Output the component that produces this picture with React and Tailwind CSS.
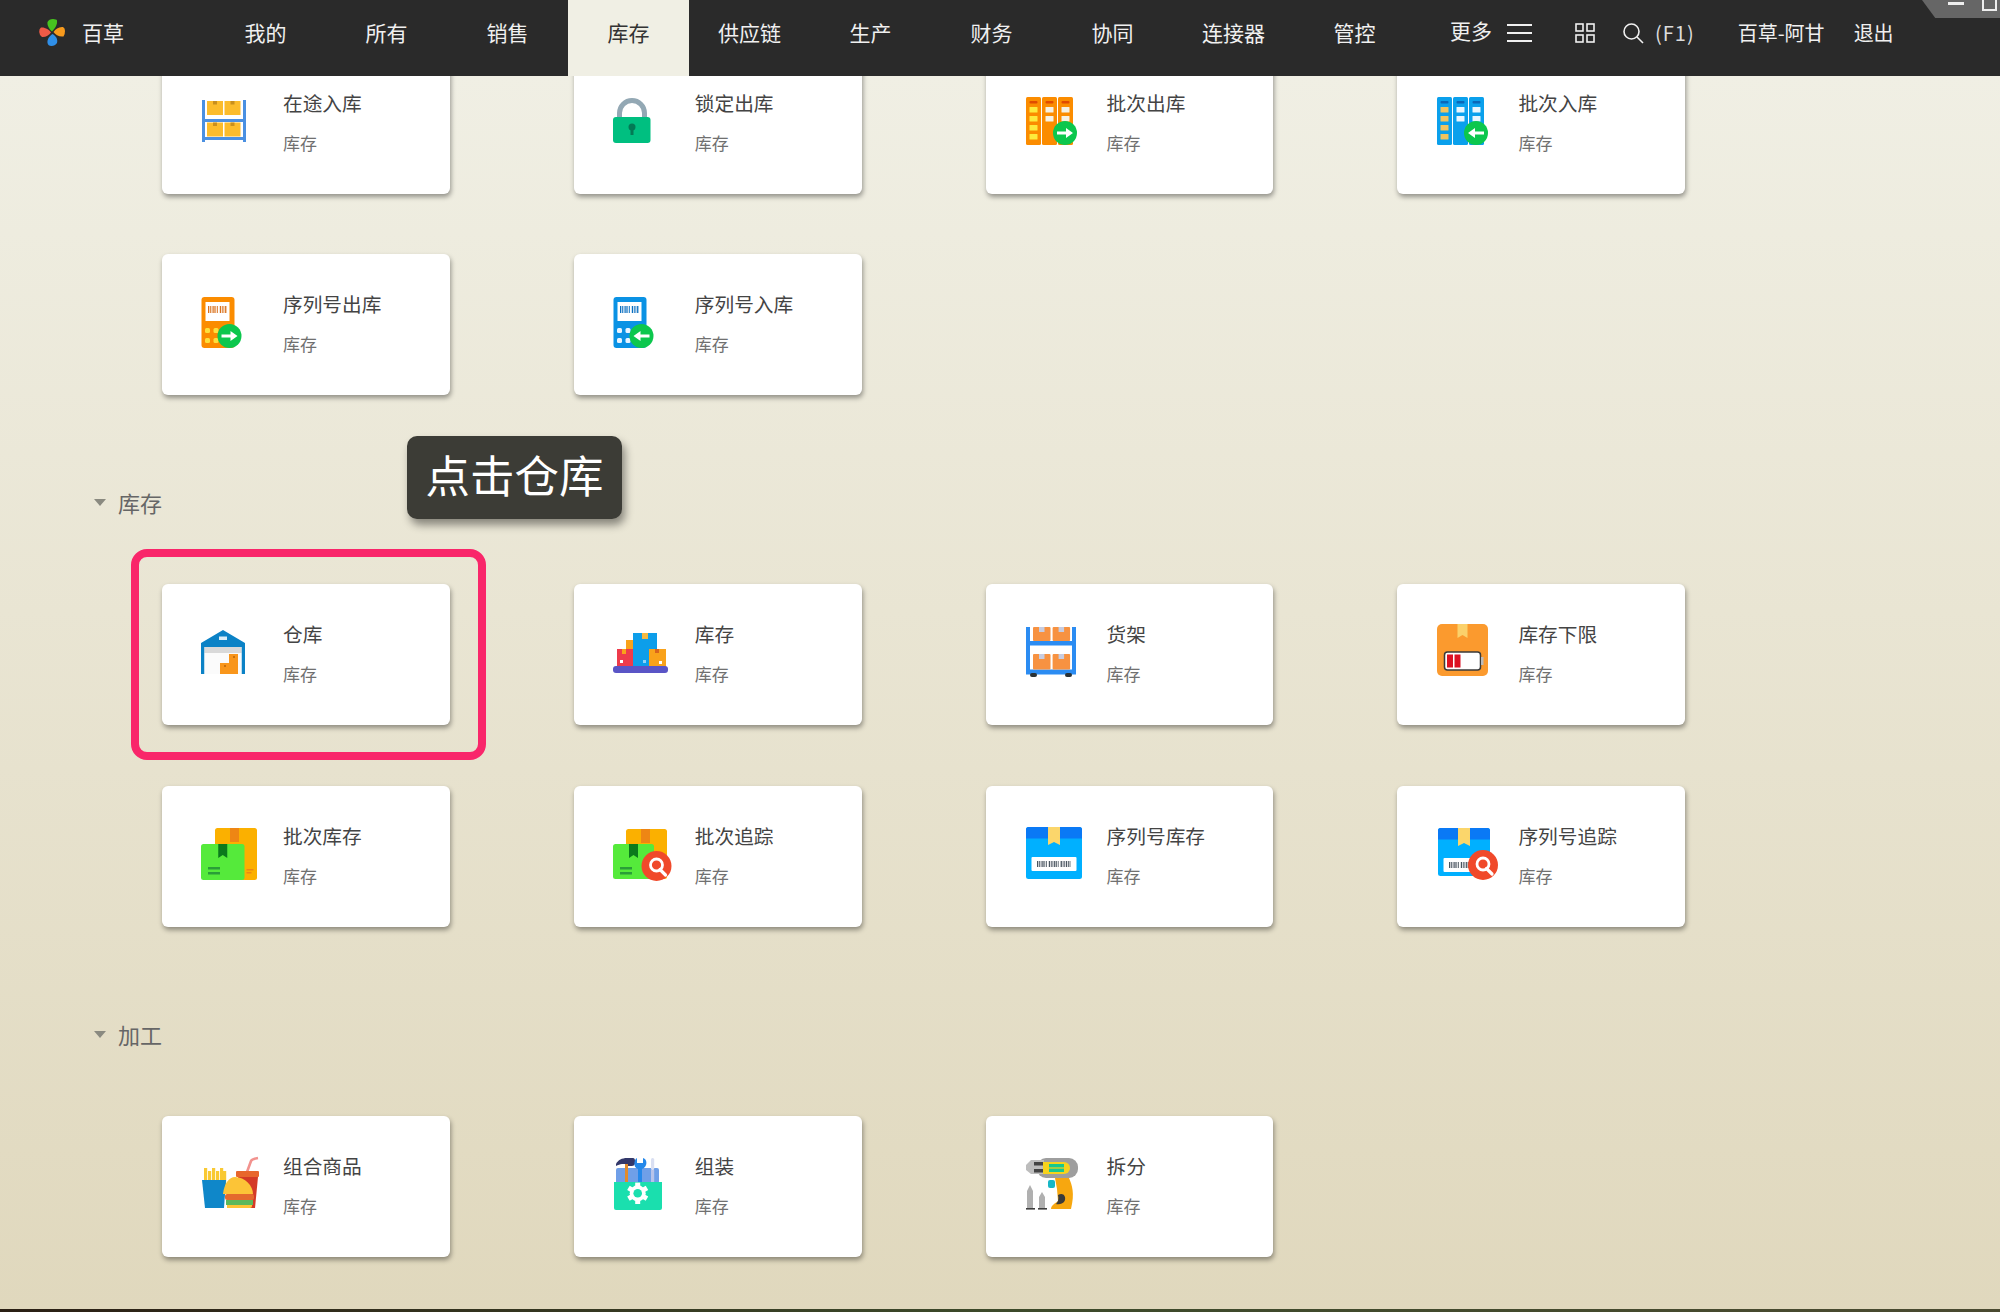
import React from "react";

const Arrow = ({ cx, cy, dir, r = 12 }) => (
  <g>
    <circle cx={cx} cy={cy} r={r} fill="#0cc74d" />
    {dir === "r" ? (
      <path d={`M${cx - 8} ${cy - 1.6}h9v-3.4l7 5l-7 5v-3.4h-9z`} fill="#fff" />
    ) : (
      <path d={`M${cx + 8} ${cy - 1.6}h-9v-3.4l-7 5l7 5v-3.4h9z`} fill="#fff" />
    )}
  </g>
);

const Lens = ({ cx, cy, r = 15 }) => (
  <g>
    <circle cx={cx} cy={cy} r={r} fill="#f0492a" />
    <circle cx={cx} cy={cy - 1} r={6} fill="none" stroke="#fff" strokeWidth="2.8" />
    <path d={`M${cx + 3.5} ${cy + 3.5}l5.5 5.5`} stroke="#fff" strokeWidth="3.2" strokeLinecap="round" />
  </g>
);

const Barcode = ({ x, y, w, h, fill }) => {
  const bars = [];
  let p = x;
  let i = 0;
  while (p < x + w) {
    const bw = i % 3 === 0 ? 1.3 : 0.8;
    bars.push(<rect key={i} x={p} y={y} width={bw} height={h} fill={fill} />);
    p += bw + (i % 6 === 5 ? 2 : 0.8);
    i += 1;
  }
  return <g>{bars}</g>;
};

const Shelf = () => (
  <g>
    <rect x="1" y="8" width="3" height="42" fill="#4a90e2" />
    <rect x="42" y="8" width="3" height="42" fill="#4a90e2" />
    <rect x="1" y="27" width="44" height="3" fill="#4a90e2" />
    <rect x="1" y="45" width="44" height="3" fill="#4a90e2" />
    {[[6, 9], [23.5, 9], [6, 30.5], [23.5, 30.5]].map(([x, y]) => (
      <g key={`${x}-${y}`}>
        <rect x={x} y={y} width="16" height="14" fill="#fbbc2c" />
        <rect x={x + 6} y={y} width="4" height="3.5" fill="#c88f1e" />
      </g>
    ))}
  </g>
);

const Lock = () => (
  <g>
    <path d="M6.5 28V21a12.5 12.5 0 0 1 25 0V28" fill="none" stroke="#93a8b4" strokeWidth="5" />
    <rect x="0" y="25" width="37.5" height="26" rx="3" fill="#00bf80" />
    <circle cx="19" cy="35" r="3.5" fill="#037a55" />
    <rect x="17.5" y="36" width="3" height="7" fill="#037a55" />
  </g>
);

const Scanner = ({ body, dot, bar, arrow }) => (
  <g>
    <rect x="0.5" y="4" width="33" height="51" rx="3" fill={body} />
    <rect x="4.5" y="9" width="24" height="19" fill="#fff" />
    <Barcode x={7} y={13} w={19} h={7} fill={bar} />
    <rect x="4" y="35" width="5" height="5" rx="1.5" fill={dot} />
    <rect x="4" y="45" width="5" height="5" rx="1.5" fill={dot} />
    <rect x="12.5" y="35" width="5" height="5" rx="1.5" fill={dot} />
    <rect x="12.5" y="45" width="5" height="5" rx="1.5" fill={dot} />
    <Arrow cx={28.5} cy={43} dir={arrow} />
  </g>
);

const Racks = ({ base, top, left, right, arrow }) => (
  <g>
    {[1, 17, 33].map((x, i) => (
      <g key={x}>
        <rect x={x} y="5" width="15" height="48" rx="1.5" fill={base} />
        <rect x={x + 3.5} y="9" width="8" height="2.5" rx="1" fill={top} />
        {(i === 0 ? [0, 1, 2, 3] : [0, 1]).map((r) => (
          <rect key={r} x={x + 3.5} y={15 + r * 9} width="8" height="5.5" rx="0.6" fill={i === 0 ? left : right} />
        ))}
      </g>
    ))}
    <Arrow cx={40} cy={41} dir={arrow} />
  </g>
);

const Warehouse = () => (
  <g>
    <path d="M22 7L44 20V51H40.5V24H3.5V51H0V20Z" fill="#0b82c6" />
    <rect x="18" y="13.5" width="8" height="3.5" fill="#dbeef8" />
    <rect x="3.5" y="24" width="37" height="6" fill="#d9d9d9" />
    <rect x="3.5" y="30" width="37" height="21" fill="#fbfbfb" />
    <path d="M19 51V40H28V31H37V51Z" fill="#f9961b" />
    <rect x="32" y="33" width="2" height="2" fill="#c96f0b" />
    <rect x="23" y="42" width="2" height="2" fill="#c96f0b" />
  </g>
);

const Boxes = () => (
  <g>
    <rect x="13" y="17" width="8" height="12" fill="#f9a21a" />
    <rect x="4" y="26" width="16" height="18" fill="#ee3b4b" />
    <rect x="9" y="26" width="4" height="5" fill="#f9a21a" />
    <rect x="7" y="37" width="3" height="3" fill="#fff" />
    <rect x="20" y="10" width="24" height="34" fill="#0d9eea" />
    <rect x="29" y="10" width="6" height="6" fill="#f4b942" />
    <rect x="30" y="37" width="3" height="3" fill="#8fd4f7" />
    <rect x="36" y="26" width="17" height="18" fill="#f9a21a" />
    <rect x="42" y="26" width="4" height="4" fill="#d9651c" />
    <rect x="46" y="38" width="3" height="3" fill="#fff" />
    <rect x="0" y="43" width="55" height="7" rx="3" fill="#5a55c6" />
  </g>
);

const CartShelf = () => (
  <g>
    <rect x="4" y="4" width="44" height="43" fill="#fff" />
    <rect x="1" y="4" width="4" height="47" fill="#2b8cf2" />
    <rect x="47" y="4" width="4" height="47" fill="#2b8cf2" />
    <rect x="1" y="18" width="50" height="4.5" fill="#2b8cf2" />
    <rect x="1" y="46.5" width="50" height="5" fill="#2b8cf2" />
    {[[8, 4, 14], [27.6, 4, 14], [8, 31, 15.5], [27.6, 31, 15.5]].map(([x, y, h]) => (
      <g key={`${x}-${y}`}>
        <rect x={x} y={y} width="17.5" height={h} rx="1" fill="#f79241" />
        <rect x={x + 6} y={y} width="5.5" height="5" fill="#c7cce0" />
      </g>
    ))}
    <rect x="5" y="50" width="7" height="4" rx="2" fill="#2a3236" />
    <rect x="40" y="50" width="7" height="4" rx="2" fill="#2a3236" />
  </g>
);

const LowStock = () => (
  <g>
    <rect x="1" y="1" width="51" height="52" rx="5" fill="#fb9a2e" />
    <path d="M21.5 1h10v14l-5 -3l-5 3z" fill="#fbd16b" />
    <rect x="8.5" y="29" width="36" height="18" rx="3" fill="#fff" stroke="#3a3a3a" strokeWidth="1.5" />
    <rect x="45" y="34" width="2.5" height="8" fill="#bcbcbc" />
    <rect x="11" y="31.5" width="6" height="13" fill="#dc1122" />
    <rect x="18.5" y="31.5" width="6" height="13" fill="#dc1122" />
  </g>
);

const BatchBox = ({ x1 = 14, x2 = 56, y1 = 3, gx2 = 43.5, by = 55, lens = false }) => (
  <g>
    <rect x={x1} y={y1} width={x2 - x1} height={by - y1} rx="2.5" fill="#fbb000" />
    <rect x={x1 + 15} y={y1} width="9" height="14" fill="#ee8614" />
    <rect x={gx2 + 2} y="44" width="7" height="1.5" fill="#ee8614" />
    <rect x={gx2 + 2} y="47" width="5" height="1.5" fill="#ee8614" />
    <rect x="0" y="19" width={gx2} height={by - 19} rx="2.5" fill="#55ea3b" />
    <path d={`M${gx2 / 2 - 4.5} 19h9v14l-4.5 -3l-4.5 3z`} fill="#0b7a1c" />
    <rect x="7" y="42" width="12" height="2.5" fill="#2a9e38" />
    <rect x="7" y="47" width="12" height="2.5" fill="#2a9e38" />
    {lens && <Lens cx={43.5} cy={41} />}
  </g>
);

const SerialBox = ({ w = 56, x = 1, y = 2, h = 52, lens = false }) => (
  <g>
    <rect x={x} y={y} width={w} height={h} rx="2.5" fill="#00b0ff" />
    <path d={`M${x + 2.5} ${y}h${w - 5}a2.5 2.5 0 0 1 2.5 2.5v9h-${w}v-9a2.5 2.5 0 0 1 2.5 -2.5z`} fill="#0a79f5" />
    <path d={`M${x + w / 2 - 6} ${y}h12v18l-6 -3l-6 3z`} fill="#fbd66b" />
    <rect x={x + 5.5} y={y + 30} width={w - 11} height="14" rx="1" fill="#fff" />
    <Barcode x={x + 11} y={y + 34} w={w - 22} h={6} fill="#4a5560" />
    {lens && <Lens cx={47} cy={40} />}
  </g>
);

const Combo = () => (
  <g>
    <path d="M46 17L50 6Q51 4 57 3" stroke="#f2928e" strokeWidth="2.6" fill="none" />
    <path d="M37 22H57L54 53H39Z" fill="#d43a26" />
    <rect x="35" y="16" width="23" height="6" rx="1" fill="#e8662c" />
    {[3, 7, 11, 15, 19, 22].map((x, i) => (
      <rect key={x} x={x} y={13 + (i % 2) * 3} width="3.2" height="14" fill="#f9c933" />
    ))}
    <path d="M1 25H25L23 53H4Z" fill="#0f87c9" />
    <path d="M22 39C23 29 28 22 34 22C44 22 52 31 52 39Z" fill="#fcc437" />
    <rect x="24" y="39" width="29" height="6" rx="2" fill="#e4692d" />
    <rect x="25" y="45" width="27" height="5" fill="#5bb85c" />
    <path d="M26 50H51V51Q51 53 49 53H26Z" fill="#fcc437" />
  </g>
);

const Kit = () => (
  <g>
    <rect x="3" y="13" width="43" height="16" rx="2" fill="#6f9fe8" />
    <rect x="12" y="8" width="3" height="22" fill="#e28b2c" />
    <path d="M3 9C5 5 9 3 14 3H20Q22 3 22 6V9Q21 11 19 11H15V9H9C7 9 5 10 3 11Z" fill="#33386a" />
    <path d="M24 3V8H30V3C33 4 34 7 33 10C32 13 29 14 29 14V29H25V14S22 13 21.5 10C21 7 22 4 24 3Z" fill="#2488ea" />
    <rect x="38" y="3" width="3.2" height="12" rx="1.5" fill="#d9dff2" />
    <rect x="38" y="15" width="3.2" height="13" fill="#b7c3ea" />
    <path d="M1 27H49V53Q49 55 47 55H3Q1 55 1 53Z" fill="#1adfae" />
    <g fill="#fff">
      {[0, 60, 120, 180, 240, 300].map((a) => (
        <rect key={a} x="22.2" y="27.6" width="5" height="5" transform={`rotate(${a} 24.7 38.3)`} />
      ))}
    </g>
    <circle cx="24.7" cy="38.3" r="8" fill="#fff" />
    <circle cx="24.7" cy="38.3" r="4.3" fill="#1adfae" />
  </g>
);

const Drill = () => (
  <g>
    <path d="M30 23H44C47 30 50 38 46 54H26C26 50 31 48 33 46L32 34Z" fill="#f7a70f" />
    <path d="M33 40C38 37 41 41 40 45C39 49 33 50 31 49C33 47 34 44 33 40Z" fill="#3a3a3a" />
    <rect x="23" y="25" width="7" height="8" rx="2" fill="#17b7c6" />
    <rect x="12" y="3" width="41" height="20" rx="9" fill="#9e9e9e" />
    <path d="M1 10L6 5H19V19H6L1 15Z" fill="#bdbdbd" />
    <rect x="9" y="7" width="9" height="3.5" fill="#444" />
    <rect x="9" y="14" width="9" height="3.5" fill="#444" />
    <path d="M18 7H39A6 6 0 0 1 39 19H18Z" fill="#f7d31c" />
    <rect x="24" y="9" width="15" height="3.4" fill="#17c88f" />
    <rect x="24" y="13.6" width="15" height="3.4" fill="#17c88f" />
    <path d="M5 30L2 36V53H8V36Z" fill="#b0b0b0" />
    <path d="M17 37L14 42V53H20V42Z" fill="#b0b0b0" />
    <rect x="1" y="53" width="9" height="1.6" fill="#3e3e3e" />
    <rect x="13" y="53" width="9" height="1.6" fill="#3e3e3e" />
  </g>
);

const sectionA = [
  ["在途入库", <Shelf />],
  ["锁定出库", <Lock />],
  ["批次出库", <Racks base="#fb8c00" top="#e04b00" left="#fdeb3c" right="#f5f1e4" arrow="r" />],
  ["批次入库", <Racks base="#0aa0ec" top="#0a67b8" left="#f2c45e" right="#e8f6ff" arrow="l" />],
  ["序列号出库", <Scanner body="#fb8c00" dot="#fde03c" bar="#d9701a" arrow="r" />],
  ["序列号入库", <Scanner body="#0a92e4" dot="#e8f4ff" bar="#0a6fc0" arrow="l" />],
];
const sectionB = [
  ["仓库", <Warehouse />],
  ["库存", <Boxes />],
  ["货架", <CartShelf />],
  ["库存下限", <LowStock />],
  ["批次库存", <BatchBox />],
  ["批次追踪", <BatchBox x1={13} x2={54} y1={4} gx2={41} by={54} lens />],
  ["序列号库存", <SerialBox />],
  ["序列号追踪", <SerialBox x={2} y={3} w={52} h={48} lens />],
];
const sectionC = [
  ["组合商品", <Combo />],
  ["组装", <Kit />],
  ["拆分", <Drill />],
];

const Card = ({ title, icon }) => (
  <div className="flex h-[141px] w-[287.8px] rounded-[6px] bg-white pl-[39px] pt-[39px] shadow-[1px_3px_5px_rgba(0,0,0,0.38)]">
    <svg width="64" height="64" viewBox="0 0 64 64" className="shrink-0">
      {icon}
    </svg>
    <div className="ml-[18px]">
      <div className="-mt-[3px] text-[19.7px] leading-[28px] text-[#444]">{title}</div>
      <div className="mt-[14px] text-[17px] leading-[24px] text-[#707070]">库存</div>
    </div>
  </div>
);

const Grid = ({ items, gapClass = "gap-y-[61px]" }) => (
  <div className={`grid grid-cols-[repeat(4,287.8px)] gap-x-[124px] ${gapClass} pl-[162px]`}>
    {items.map(([t, i]) => (
      <Card key={t} title={t} icon={i} />
    ))}
  </div>
);

const SectionLabel = ({ children }) => (
  <div className="flex h-[28px] items-center pl-[94px] text-[22px] leading-[28px] text-[#666]">
    <span className="mr-[12px] h-0 w-0 border-x-[6.5px] border-t-[7px] border-x-transparent border-t-[#8a8a80]" />
    {children}
  </div>
);

const Logo = () => (
  <svg width="27" height="27" viewBox="0 0 27 27">
    <path d="M13 12.5C10 10 8 6 8.5 3Q10 0 14 0Q17.5 0 18 1.5C18.5 6 16 9 13 12.5Z" fill="#47c41f" />
    <path d="M14.5 13C16.5 10 20 7.5 24 8Q26 9 26 12Q26 16 24.5 17.5C20 18 16.5 16 14.5 13Z" fill="#f79a1d" />
    <path d="M13.5 15C17 17 19 20 18 24Q16 27 12.5 27Q9 27 8.5 24C8 20 10.5 17 13.5 15Z" fill="#2f8fe8" />
    <path d="M12 13.5C10 16 6.5 18.5 3 18Q0.5 16.5 0.2 13Q0 9.5 2 8.5C6 8 10 10.5 12 13.5Z" fill="#ee5a47" />
  </svg>
);

const tabs = ["我的", "所有", "销售", "库存", "供应链", "生产", "财务", "协同", "连接器", "管控"];

export default function App() {
  return (
    <div className="relative flex h-[1312px] w-[2000px] flex-col overflow-hidden font-['Noto_Sans_CJK_SC','Noto_Sans',sans-serif]">
      <header className="relative z-10 flex h-[76px] shrink-0 items-start bg-[#2a2a2a] text-[20px] leading-[28px] text-[#f0f0f0]">
        <div className="flex w-[205px] items-center pl-[39px] pt-[19px]">
          <Logo />
          <span className="ml-[16px] -mt-[2px] text-[21px]">百草</span>
        </div>
        {tabs.map((t) => (
          <div
            key={t}
            className={
              t === "库存"
                ? "h-[76px] w-[121px] bg-[#f0efe4] pt-[18px] text-center text-[21px] text-[#333]"
                : "h-[76px] w-[121px] pt-[18px] text-center text-[21px]"
            }
          >
            {t}
          </div>
        ))}
        <span className="ml-[35px] pt-[16px] text-[21px]">更多</span>
        <svg width="26" height="20" viewBox="0 0 26 20" className="ml-[15px] mt-[23px]" stroke="#f0f0f0" strokeWidth="2.2">
          <path d="M0 2H25M0 10H25M0 18H25" />
        </svg>
        <svg width="20" height="20" viewBox="0 0 20 20" className="ml-[42px] mt-[23px]" fill="none" stroke="#f0f0f0" strokeWidth="1.6">
          <rect x="1" y="1" width="7" height="7" />
          <rect x="12" y="1" width="7" height="7" />
          <rect x="1" y="12" width="7" height="7" />
          <rect x="12" y="12" width="7" height="7" />
        </svg>
        <svg width="21" height="21" viewBox="0 0 21 21" className="ml-[28px] mt-[23px]" fill="none" stroke="#f0f0f0" strokeWidth="1.6">
          <circle cx="8.5" cy="8.5" r="7.5" />
          <path d="M14 14L20 20" />
        </svg>
        <span className="ml-[11px] pt-[19px] tracking-[1px] text-[#dcdcdc]">(F1)</span>
        <span className="ml-[43px] pt-[19px]">百草-阿甘</span>
        <span className="ml-[29px] pt-[19px]">退出</span>
        <div className="absolute right-0 top-0 h-[18px] w-[78px] bg-[#666] [clip-path:polygon(0_0,100%_0,100%_100%,17%_100%)]">
          <div className="absolute left-[26px] top-[2px] h-[3px] w-[16px] bg-[#eee]" />
          <div className="absolute left-[60px] -top-[3px] h-[14px] w-[15px] border-2 border-[#eee]" />
        </div>
      </header>

      <main className="min-h-0 flex-1 overflow-hidden bg-linear-to-b from-[#f0efe4] to-[#e0d8bd]">
        <div className="-mt-[23px]">
          <Grid items={sectionA} gapClass="gap-y-[60px]" />
          <div className="mt-[93px]">
            <SectionLabel>库存</SectionLabel>
          </div>
          <div className="mt-[68px]">
            <Grid items={sectionB} />
          </div>
          <div className="mt-[93px]">
            <SectionLabel>加工</SectionLabel>
          </div>
          <div className="mt-[68px]">
            <Grid items={sectionC} />
          </div>
        </div>
      </main>
      <div className="h-[3px] shrink-0 bg-linear-to-r from-[#2a1f14] via-[#3c4a2a] to-[#4a4a30]" />

      <div className="absolute left-[407px] top-[436px] flex h-[83px] w-[215px] items-center justify-center rounded-[10px] bg-[#3c3c36] pb-[7px] text-[44.5px] font-normal text-white shadow-[3px_6px_8px_rgba(0,0,0,0.42)]">
        点击仓库
      </div>
      <div className="absolute left-[131px] top-[549px] h-[211px] w-[355px] rounded-[16px] border-[8px] border-[#f9266a]" />
    </div>
  );
}
